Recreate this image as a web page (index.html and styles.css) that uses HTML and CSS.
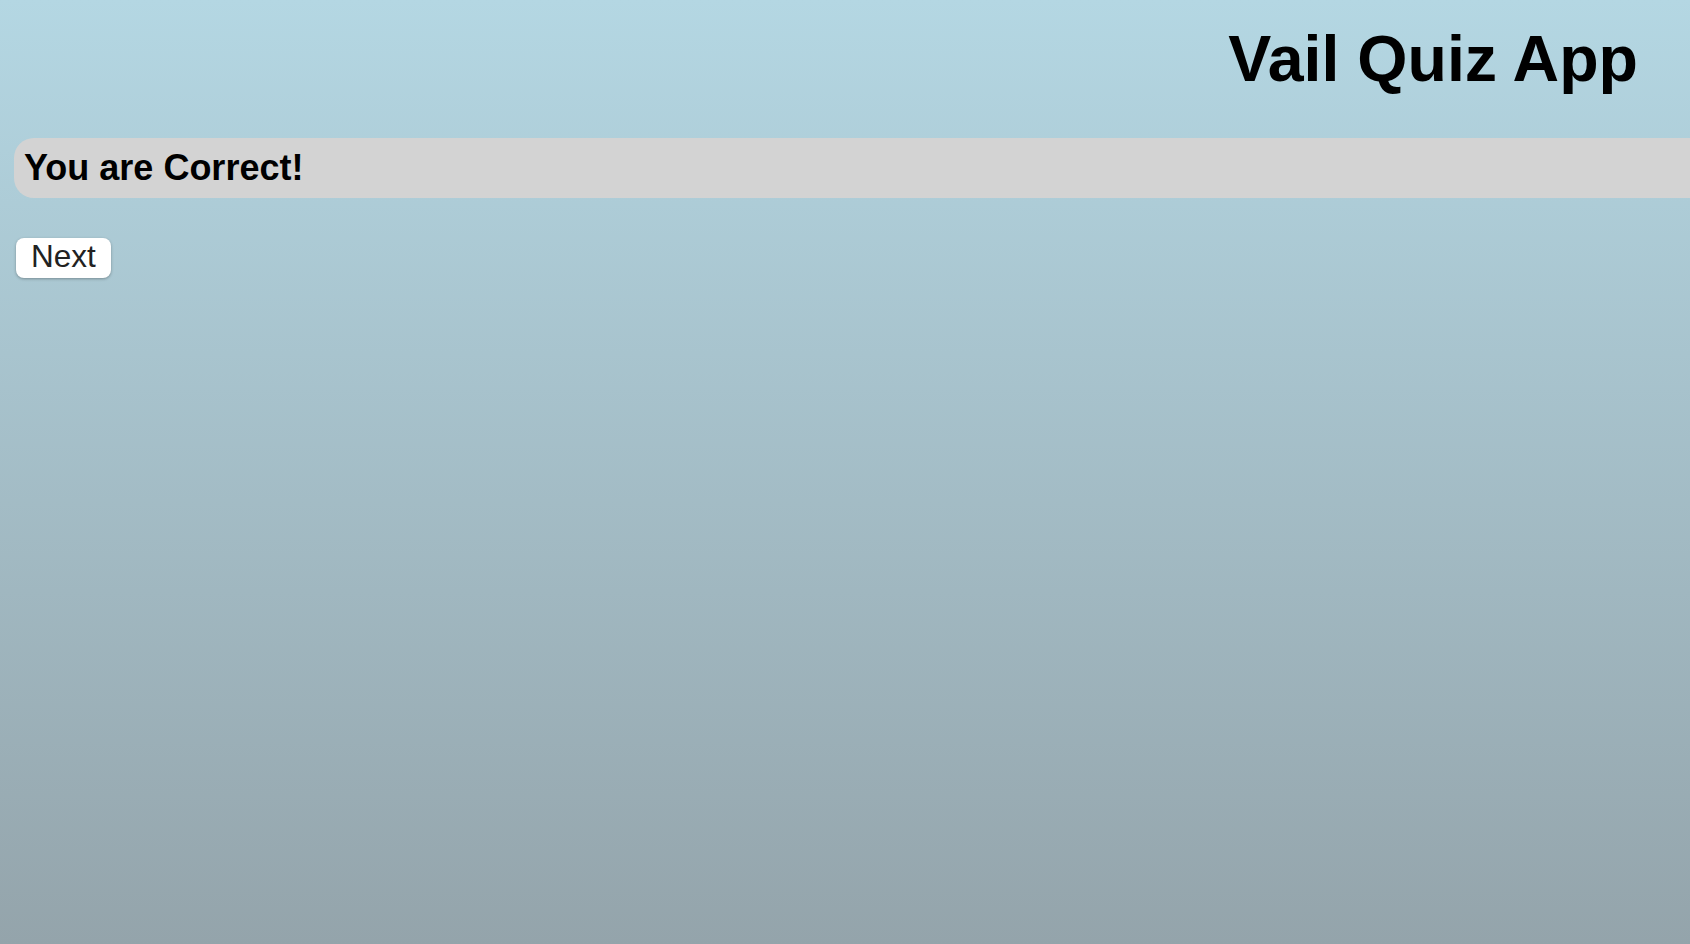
FILE: index.html
```html
<!DOCTYPE html>
<html lang="en">
<head>
<meta charset="utf-8">
<title>Vail Quiz App</title>
<link rel="stylesheet" href="styles.css">
</head>
<body>
  <header class="app-header">
    <h1 class="app-title">Vail Quiz App</h1>
  </header>
  <main class="quiz">
    <div class="result-banner">You are Correct!</div>
    <div class="actions">
      <button class="next-btn" type="button">Next</button>
    </div>
  </main>
</body>
</html>
```

FILE: styles.css
```css
html, body {
  margin: 0;
  padding: 0;
  height: 100%;
}

body {
  font-family: "Liberation Sans", Arial, Helvetica, sans-serif;
  background: linear-gradient(to bottom, #b4d7e3 0%, #94a4ab 100%);
  overflow: hidden;
  color: #000;
}

.app-header {
  display: flex;
  justify-content: flex-end;
  padding: 22px 52px 0 0;
}

.app-title {
  margin: 0;
  font-size: 64.5px;
  font-weight: bold;
  line-height: normal;
}

.quiz {
  padding: 42px 0 0 14px;
}

.result-banner {
  margin-right: -40px;
  background: #d3d3d3;
  border-radius: 20px;
  padding: 9px 10px 9px;
  font-size: 36px;
  font-weight: bold;
  line-height: normal;
}

.actions {
  padding: 40px 0 0 2px;
}

.next-btn {
  font-family: "Liberation Sans", Arial, Helvetica, sans-serif;
  font-size: 31.5px;
  line-height: 36px;
  color: #222;
  background: #fff;
  border: none;
  border-radius: 8px;
  padding: 0 15px 4px;
  box-shadow: 0 1px 3px rgba(0, 0, 0, 0.3);
  cursor: pointer;
}
```
